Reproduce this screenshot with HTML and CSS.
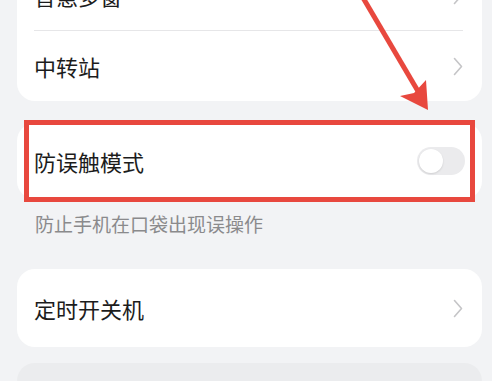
FILE: index.html
```html
<!DOCTYPE html>
<html lang="zh-CN">
<head>
  <meta charset="UTF-8">
  <meta name="viewport" content="width=device-width, initial-scale=1.0">
  <title>设置</title>
  <link rel="stylesheet" href="styles.css">
</head>
<body>
  <div class="page">
    <div class="card card-top">
      <div class="row">
        <span class="label">智慧多窗</span>
        <svg class="chevron" viewBox="0 0 10 19"><path d="M1.5 1.5 L8.5 9.5 L1.5 17.5" /></svg>
      </div>
      <div class="row">
        <span class="label">中转站</span>
        <svg class="chevron" viewBox="0 0 10 19"><path d="M1.5 1.5 L8.5 9.5 L1.5 17.5" /></svg>
      </div>
    </div>

    <div class="marked">
      <div class="card">
        <div class="row row-single">
          <span class="label">防误触模式</span>
          <span class="switch"><span class="knob"></span></span>
        </div>
      </div>
      <div class="highlight-box"></div>
    </div>
    <p class="hint">防止手机在口袋出现误操作</p>

    <div class="card">
      <div class="row row-tall">
        <span class="label">定时开关机</span>
        <svg class="chevron" viewBox="0 0 10 19"><path d="M1.5 1.5 L8.5 9.5 L1.5 17.5" /></svg>
      </div>
    </div>

    <div class="card card-faded"></div>

    <svg class="pointer" viewBox="0 0 492 120">
      <line x1="362" y1="-4" x2="422" y2="98" />
      <polygon points="428,110 400,96 414,93 426,80" />
    </svg>
  </div>
</body>
</html>
```

FILE: styles.css
```css
body {
  margin: 0;
  background-color: #f2f3f5;
  font-family: "Noto Sans CJK SC", "Noto Sans", sans-serif;
  overflow: hidden;
}
.page {
  position: relative;
  height: 381px;
  overflow: hidden;
}
.card {
  background-color: #fff;
  border-radius: 18px;
  margin: 0 10px 0 17px;
  padding: 0 19px 0 17px;
}
.card-top {
  margin-top: -40px;
}
.row {
  display: flex;
  align-items: center;
  justify-content: space-between;
  height: 70px;
}
.row + .row {
  border-top: 1px solid #e6e6e8;
}
.row-single {
  height: 76px;
}
.row-tall {
  height: 78px;
}
.label {
  font-size: 22px;
  color: #1c1c1c;
}
.chevron {
  width: 10px;
  height: 19px;
}
.chevron path {
  fill: none;
  stroke: #c5c5c7;
  stroke-width: 1.6;
  stroke-linecap: round;
  stroke-linejoin: round;
}
.switch {
  display: flex;
  align-items: center;
  width: 48px;
  height: 28px;
  border-radius: 14px;
  background-color: #ebebed;
  padding: 0 2px;
  box-sizing: border-box;
  margin-right: -2px;
}
.knob {
  width: 24px;
  height: 24px;
  border-radius: 50%;
  background-color: #fff;
  box-shadow: 0 1px 2px rgba(0,0,0,0.12);
}
.marked {
  position: relative;
  margin-top: 22px;
}
.highlight-box {
  position: absolute;
  left: 24px;
  right: 17px;
  top: -3px;
  bottom: -3px;
  border: 5px solid #e8483e;
}
.hint {
  margin: 13px 0 0 35px;
  font-size: 19px;
  color: #8a8a8c;
  line-height: 24px;
}
.hint + .card {
  margin-top: 33px;
}
.card-faded {
  margin-top: 16px;
  height: 40px;
  background-color: #ebecee;
}
.pointer {
  position: absolute;
  left: 0;
  top: 0;
  width: 492px;
  height: 120px;
}
.pointer line {
  stroke: #e8483e;
  stroke-width: 5;
}
.pointer polygon {
  fill: #e8483e;
}
```
